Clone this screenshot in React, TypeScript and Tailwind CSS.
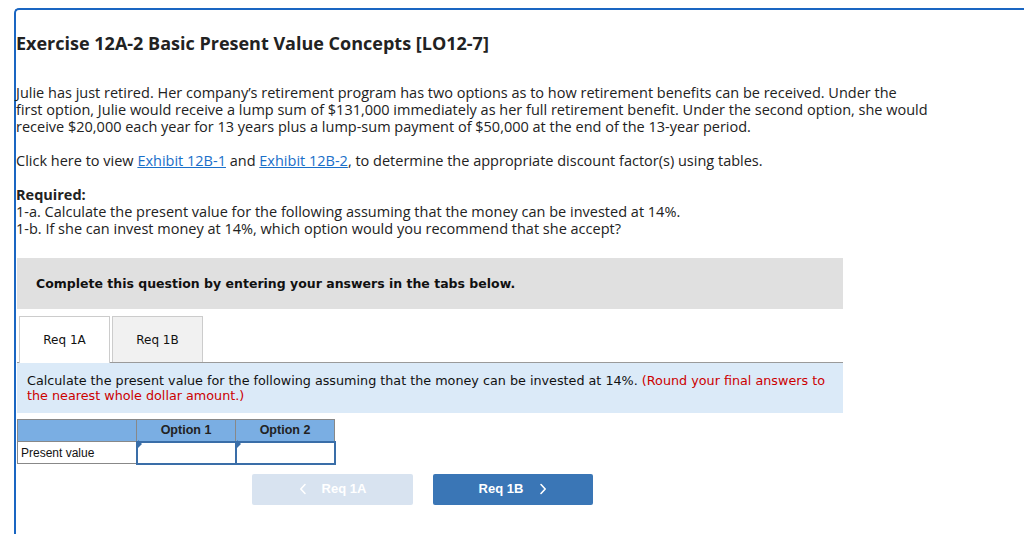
import React from "react";

function Chevron({ dir }: { dir: "left" | "right" }) {
  return (
    <svg width="8" height="12" viewBox="0 0 8 12" fill="none" stroke="currentColor" strokeWidth="1.6" strokeLinecap="round" strokeLinejoin="round">
      {dir === "left" ? <path d="M6 1.5 L1.8 6 L6 10.5" /> : <path d="M2 1.5 L6.2 6 L2 10.5" />}
    </svg>
  );
}

export default function App() {
  const body = { fontFamily: '"Open Sans", "Lato", sans-serif' };
  const verdana = { fontFamily: '"DejaVu Sans", Verdana, sans-serif' };
  const arial = { fontFamily: '"Liberation Sans", Arial, sans-serif' };
  return (
    <div className="w-[1024px] h-[534px] overflow-hidden bg-white">
      <div className="ml-[14px] mt-[8px] h-[600px] border-t-2 border-l-2 border-[#1a66c2] rounded-tl-[5px] text-[#222]" style={body}>
        <h1 className="pt-[21px] text-[18px] leading-[24px] font-bold text-[#222]">
          Exercise 12A-2 Basic Present Value Concepts [LO12-7]
        </h1>
        <p className="mt-[29px] text-[14.5px] leading-[17px] whitespace-nowrap">
          Julie has just retired. Her company’s retirement program has two options as to how retirement benefits can be received. Under the
          <br />
          first option, Julie would receive a lump sum of $131,000 immediately as her full retirement benefit. Under the second option, she would
          <br />
          receive $20,000 each year for 13 years plus a lump-sum payment of $50,000 at the end of the 13-year period.
        </p>
        <p className="mt-[17px] text-[14.5px] leading-[17px]">
          Click here to view <span className="text-[#1a6fc9] underline">Exhibit 12B-1</span> and <span className="text-[#1a6fc9] underline">Exhibit 12B-2</span>, to determine the appropriate discount factor(s) using tables.
        </p>
        <p className="mt-[17px] text-[14.5px] leading-[17px] font-bold">Required:</p>
        <p className="text-[14.5px] leading-[17px]">1-a. Calculate the present value for the following assuming that the money can be invested at 14%.</p>
        <p className="text-[14.5px] leading-[17px]">1-b. If she can invest money at 14%, which option would you recommend that she accept?</p>

        <div className="ml-[1px] mt-[21px] w-[826px] h-[51px] bg-[#e0e0e0] pl-[19px] pt-[13px]" style={verdana}>
          <span className="text-[12.5px] leading-[16px] font-bold text-[#111]">Complete this question by entering your answers in the tabs below.</span>
        </div>

        <div className="ml-[1px] mt-[7px] w-[826px] flex items-end border-b border-[#9a9a9a]" style={verdana}>
          <div className="ml-[2px] w-[91px] h-[47px] bg-white border border-b-0 border-[#cccccc] flex items-center justify-center text-[12px] text-[#111] -mb-px relative">
            Req 1A
          </div>
          <div className="ml-[2px] w-[91px] h-[46px] bg-[#f1f1f1] border border-b-0 border-[#cccccc] flex items-center justify-center text-[12px] text-[#111]">
            Req 1B
          </div>
        </div>
        <div className="ml-[1px] w-[826px] h-[50px] bg-[#dbeaf8] pl-[10px] pt-[10px] text-[12.75px] leading-[15px] text-[#111]" style={verdana}>
          Calculate the present value for the following assuming that the money can be invested at 14%. <span className="text-[#c00]">(Round your final answers to the nearest whole dollar amount.)</span>
        </div>

        <table className="ml-[1px] mt-[6px] border-collapse" style={arial}>
          <thead>
            <tr className="bg-[#7aaee3] h-[22px]">
              <th className="w-[119px] border border-[#888]"></th>
              <th className="w-[99px] border border-[#888] text-[12.5px] font-bold text-[#222]">Option 1</th>
              <th className="w-[99px] border border-[#888] text-[12.5px] font-bold text-[#222]">Option 2</th>
            </tr>
          </thead>
          <tbody>
            <tr className="h-[22px]">
              <td className="border border-[#888] text-[12px] text-[#111] pl-[3px] text-left">Present value</td>
              <td className="border-2 border-[#3a6ea8] relative p-0">
                <div className="absolute left-0 w-0 h-0 border-t-[4px] border-b-[4px] border-l-[4px] border-t-transparent border-b-transparent border-l-[#3a6ea8]" style={{ top: -3 }}></div>
              </td>
              <td className="border-2 border-[#3a6ea8] relative p-0">
                <div className="absolute left-0 w-0 h-0 border-t-[4px] border-b-[4px] border-l-[4px] border-t-transparent border-b-transparent border-l-[#3a6ea8]" style={{ top: -3 }}></div>
              </td>
            </tr>
          </tbody>
        </table>

        <div className="mt-[9px] ml-[236px] flex gap-[20px]" style={arial}>
          <div className="w-[161px] h-[31px] bg-[#d8e3f0] rounded-[2px] flex items-center justify-center text-white text-[13px] font-bold">
            <span className="mr-[15px] flex items-center"><Chevron dir="left" /></span>Req 1A
          </div>
          <div className="w-[160px] h-[31px] bg-[#3a76b6] rounded-[2px] flex items-center justify-center text-white text-[13px] font-bold">
            Req 1B<span className="ml-[16px] flex items-center"><Chevron dir="right" /></span>
          </div>
        </div>
      </div>
    </div>
  );
}
